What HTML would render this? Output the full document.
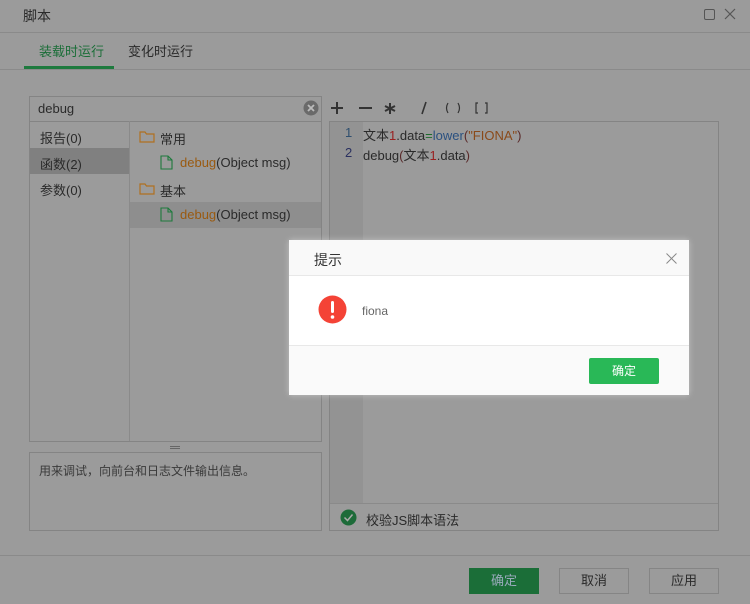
<!DOCTYPE html><html><head><meta charset="utf-8"><style>
*{margin:0;padding:0;box-sizing:border-box}
body{width:750px;height:604px;background:#9b9b9b;font-family:"Liberation Sans","Noto Sans CJK SC",sans-serif;font-size:13px;color:#2a2a2a;position:relative;overflow:hidden}
.a{position:absolute}
.ln{position:absolute;background:#8a8a8a}
.btn{position:absolute;height:26px;width:70px;border:1px solid #858585;text-align:center;line-height:24px;font-size:13px}
.tb{position:absolute;top:98px;color:#333;font-size:17px;font-weight:bold}
</style></head><body>
<div class="a" style="left:23px;top:6px;font-size:14px">脚本</div>
<div class="a" style="left:704px;top:9px;width:11px;height:11px;border:1px solid #555;border-radius:2px"></div>
<svg class="a" style="left:724px;top:8px" width="12" height="12"><path d="M1 1L11 11M11 1L1 11" stroke="#555" stroke-width="1.2"/></svg>
<div class="ln" style="left:0;top:32px;width:750px;height:1px"></div>
<div class="a" style="left:39px;top:41px;color:#1b6e38">装载时运行</div>
<div class="a" style="left:128px;top:41px">变化时运行</div>
<div class="a" style="left:24px;top:66px;width:90px;height:3px;background:#1e7a3e"></div>
<div class="ln" style="left:0;top:69px;width:750px;height:1px"></div>

<div class="a" style="left:29px;top:96px;width:293px;height:26px;border:1px solid #848484"></div>
<div class="a" style="left:38px;top:101px">debug</div>
<svg class="a" style="left:303px;top:100px" width="16" height="16"><circle cx="8" cy="8" r="7.5" fill="#6a6a6a"/><path d="M5 5L11 11M11 5L5 11" stroke="#bbb" stroke-width="1.8"/></svg>
<div class="a" style="left:29px;top:121px;width:293px;height:321px;border:1px solid #848484;border-top:none"></div>
<div class="ln" style="left:129px;top:121px;width:1px;height:320px"></div>
<div class="a" style="left:30px;top:148px;width:99px;height:26px;background:#808080"></div>
<div class="a" style="left:40px;top:128px">报告(0)</div>
<div class="a" style="left:40px;top:154px">函数(2)</div>
<div class="a" style="left:40px;top:180px">参数(0)</div>
<div class="a" style="left:130px;top:202px;width:191px;height:26px;background:#8e8e8e"></div>
<svg class="a" style="left:139px;top:130px" width="16" height="13"><path d="M1 2h5l1.5 2H15v8H1z" fill="none" stroke="#b07020" stroke-width="1.2"/></svg>
<div class="a" style="left:160px;top:129px">常用</div>
<svg class="a" style="left:160px;top:155px" width="13" height="15"><path d="M1 1h7l4 4v9H1z M8 1v4h4" fill="none" stroke="#1d7a3c" stroke-width="1.1"/></svg>
<div class="a" style="left:180px;top:155px"><span style="color:#9a5a10">debug</span>(Object msg)</div>
<svg class="a" style="left:139px;top:182px" width="16" height="13"><path d="M1 2h5l1.5 2H15v8H1z" fill="none" stroke="#b07020" stroke-width="1.2"/></svg>
<div class="a" style="left:160px;top:181px">基本</div>
<svg class="a" style="left:160px;top:207px" width="13" height="15"><path d="M1 1h7l4 4v9H1z M8 1v4h4" fill="none" stroke="#1d7a3c" stroke-width="1.1"/></svg>
<div class="a" style="left:180px;top:207px"><span style="color:#9a5a10">debug</span>(Object msg)</div>
<div class="a" style="left:170px;top:446px;width:10px;height:3px;border-top:1px solid #666;border-bottom:1px solid #666"></div>
<div class="a" style="left:29px;top:452px;width:293px;height:79px;border:1px solid #848484"></div>
<div class="a" style="left:39px;top:462px;font-size:12px;color:#3a3a3a">用来调试，向前台和日志文件输出信息。</div>

<svg class="a" style="left:330px;top:100px" width="160" height="16"><g stroke="#333" stroke-width="2" fill="none"><path d="M1 8h12M7 2v12"/><path d="M29 8h13"/><path d="M60 3v11M55 6l10 5M65 6l-10 5"/><path d="M96 2l-4 12" stroke-width="1.6"/></g><g stroke="#333" stroke-width="1.2" fill="none"><path d="M118 3q-3 5 0 10M128 3q3 5 0 10"/><path d="M148 3h-2v10h2M155 3h2v10h-2"/></g></svg>
<div class="a" style="left:329px;top:121px;width:390px;height:410px;border:1px solid #848484"></div>
<div class="a" style="left:330px;top:122px;width:33px;height:381px;background:#939393"></div>
<div class="a" style="left:345px;top:125px;color:#2f4f6f">1</div>
<div class="a" style="left:345px;top:145px;color:#2a3060">2</div>
<div class="a" style="left:363px;top:125px">文本<span style="color:#9a2020">1</span>.data<span style="color:#1d6a2c">=</span><span style="color:#2a5080">lower</span><span style="color:#5a2a2a">(</span><span style="color:#8a4a1a">"FIONA"</span><span style="color:#5a2a2a">)</span></div>
<div class="a" style="left:363px;top:145px">debug<span style="color:#5a2a2a">(</span>文本<span style="color:#9a2020">1</span>.data<span style="color:#5a2a2a">)</span></div>
<div class="ln" style="left:330px;top:503px;width:388px;height:1px"></div>
<svg class="a" style="left:340px;top:509px" width="17" height="17"><circle cx="8.5" cy="8.5" r="8" fill="#1d6b39"/><path d="M4.5 8.5l3 3 5-6" fill="none" stroke="#aaa" stroke-width="1.5"/></svg>
<div class="a" style="left:366px;top:510px">校验JS脚本语法</div>

<div class="ln" style="left:0;top:555px;width:750px;height:1px"></div>
<div class="btn" style="left:469px;top:568px;background:#1b6e38;border-color:#1b6e38;color:#9ab">确定</div>
<div class="btn" style="left:559px;top:568px">取消</div>
<div class="btn" style="left:649px;top:568px">应用</div>

<div class="a" style="left:289px;top:240px;width:400px;height:155px;background:#fff;box-shadow:0 0 6px rgba(255,255,255,.4)">
<div style="height:36px;background:#f9f9f9;border-bottom:1px solid #e8e8e8;position:relative"><span class="a" style="left:25px;top:10px;font-size:14px;color:#333">提示</span>
<svg class="a" style="left:377px;top:13px" width="11" height="11"><path d="M0.5 0.5L10.5 10.5M10.5 0.5L0.5 10.5" stroke="#888" stroke-width="1"/></svg></div>
<svg class="a" style="left:29px;top:55px" width="29" height="29"><circle cx="14.5" cy="14.5" r="14" fill="#f44336"/><rect x="13" y="6" width="3" height="12" rx="1.5" fill="#fff"/><circle cx="14.5" cy="22" r="1.8" fill="#fff"/></svg>
<div class="a" style="left:73px;top:64px;font-size:12px;color:#666">fiona</div>
<div class="a" style="left:0;top:105px;width:400px;height:50px;background:#fafafa;border-top:1px solid #e8e8e8"></div>
<div class="a" style="left:300px;top:118px;width:70px;height:26px;background:#29b857;border-radius:2px;color:#fff;font-size:12px;text-align:center;line-height:26px">确定</div>
</div>
</body></html>
